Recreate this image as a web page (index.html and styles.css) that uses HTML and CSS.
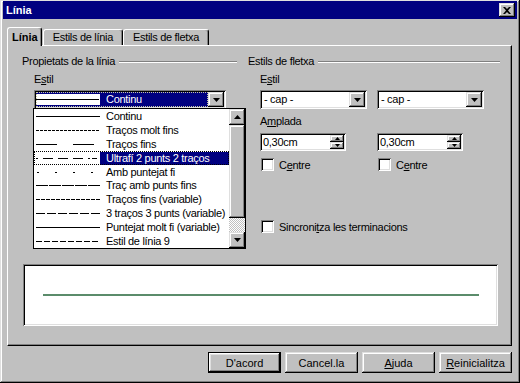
FILE: index.html
```html
<!doctype html>
<html lang="ca">
<head>
<meta charset="utf-8">
<title>Línia</title>
<link rel="stylesheet" href="styles.css">
</head>
<body>
<div class="window">
	<div class="titlebar">
		<span class="title">Línia</span>
		<span class="close"><svg width="8" height="7" viewBox="0 0 8 7"><path d="M0 0h2l2 2 2-2h2l-3 3.5 3 3.5h-2l-2-2-2 2h-2l3-3.5z" fill="#000"/></svg></span>
	</div>

	<div class="dlg">
		<div class="tabs">
			<div class="tab active">Línia</div>
			<div class="tab">Estils de línia</div>
			<div class="tab">Estils de fletxa</div>
		</div>

		<div class="panel">
			<div class="groups">
				<!-- propietats de la línia -->
				<div class="group">
					<div class="group-head"><span>Propietats de la línia</span></div>
					<div class="group-body">
						<div class="lbl">E<u>s</u>til</div>
						<div class="combo-wrap">
							<div class="combo combo-line">
								<div class="val sel">
									<span class="sample-box"><svg width="63" height="11"><line x1="0" y1="5.5" x2="63" y2="5.5" stroke="#000" stroke-width="1" shape-rendering="crispEdges"/></svg></span>
									<span class="txt">Continu</span>
								</div>
								<div class="drop-btn"><svg width="7" height="4"><path d="M0 0h7l-3.5 4z" fill="#000"/></svg></div>
							</div>

							<div class="droplist">
								<div class="items">
									<div class="item"><span class="sample"><svg width="64" height="13"><line x1="0" y1="6.5" x2="64" y2="6.5" stroke="#000" shape-rendering="crispEdges"/></svg></span><span class="label">Continu</span></div>
									<div class="item"><span class="sample"><svg width="64" height="13"><line x1="0" y1="6.5" x2="64" y2="6.5" stroke="#000" stroke-dasharray="3 1" shape-rendering="crispEdges"/></svg></span><span class="label">Traços molt fins</span></div>
									<div class="item"><span class="sample"><svg width="64" height="13"><line x1="0" y1="6.5" x2="64" y2="6.5" stroke="#000" stroke-dasharray="21 16" shape-rendering="crispEdges"/></svg></span><span class="label">Traços fins</span></div>
									<div class="item on"><span class="sample"><svg width="64" height="13"><line x1="0" y1="6.5" x2="64" y2="6.5" stroke="#000" stroke-dasharray="2 5 10 5 10 5 10 5 2" shape-rendering="crispEdges"/></svg></span><span class="label">Ultrafí 2 punts 2 traços</span></div>
									<div class="item"><span class="sample"><svg width="64" height="13"><line x1="1" y1="6.5" x2="64" y2="6.5" stroke="#000" stroke-dasharray="2 16" shape-rendering="crispEdges"/></svg></span><span class="label">Amb puntejat fi</span></div>
									<div class="item"><span class="sample"><svg width="64" height="13"><line x1="0" y1="6.5" x2="64" y2="6.5" stroke="#000" stroke-dasharray="12 1" shape-rendering="crispEdges"/></svg></span><span class="label">Traç amb punts fins</span></div>
									<div class="item"><span class="sample"><svg width="64" height="13"><line x1="0" y1="6.5" x2="64" y2="6.5" stroke="#000" stroke-dasharray="4 1" shape-rendering="crispEdges"/></svg></span><span class="label">Traços fins (variable)</span></div>
									<div class="item"><span class="sample"><svg width="64" height="13"><line x1="0" y1="6.5" x2="64" y2="6.5" stroke="#000" stroke-dasharray="9 2" shape-rendering="crispEdges"/></svg></span><span class="label">3 traços 3 punts (variable)</span></div>
									<div class="item"><span class="sample"><svg width="64" height="13"><line x1="0" y1="6.5" x2="64" y2="6.5" stroke="#000" shape-rendering="crispEdges"/></svg></span><span class="label">Puntejat molt fi (variable)</span></div>
									<div class="item"><span class="sample"><svg width="64" height="13"><line x1="0" y1="6.5" x2="64" y2="6.5" stroke="#000" stroke-dasharray="6 2" shape-rendering="crispEdges"/></svg></span><span class="label">Estil de línia 9</span></div>
								</div>
								<div class="vscroll">
									<div class="sbtn"><svg width="7" height="4"><path d="M3.5 0l3.5 4h-7z" fill="#000"/></svg></div>
									<div class="thumb"></div>
									<div class="track"></div>
									<div class="sbtn"><svg width="7" height="4"><path d="M0 0h7l-3.5 4z" fill="#000"/></svg></div>
								</div>
							</div>
						</div>
					</div>
				</div>

				<!-- estils de fletxa -->
				<div class="group">
					<div class="group-head"><span>Estils de fletxa</span></div>
					<div class="group-body arrows">
						<div class="lbl">E<u>s</u>til</div>
						<div class="pair">
							<div class="combo"><div class="val">- cap -</div><div class="drop-btn"><svg width="7" height="4"><path d="M0 0h7l-3.5 4z" fill="#000"/></svg></div></div>
							<div class="combo"><div class="val">- cap -</div><div class="drop-btn"><svg width="7" height="4"><path d="M0 0h7l-3.5 4z" fill="#000"/></svg></div></div>
						</div>
						<div class="lbl gap-top">A<u>m</u>plada</div>
						<div class="pair spins">
							<div class="spin"><div class="val">0,30cm</div><div class="spin-btns"><span><svg width="5" height="3"><path d="M2.5 0l2.5 3h-5z" fill="#000"/></svg></span><span><svg width="5" height="3"><path d="M0 0h5l-2.5 3z" fill="#000"/></svg></span></div></div>
							<div class="spin"><div class="val">0,30cm</div><div class="spin-btns"><span><svg width="5" height="3"><path d="M2.5 0l2.5 3h-5z" fill="#000"/></svg></span><span><svg width="5" height="3"><path d="M0 0h5l-2.5 3z" fill="#000"/></svg></span></div></div>
						</div>
						<div class="pair checks">
							<label class="check"><span class="box"></span>C<u>e</u>ntre</label>
							<label class="check"><span class="box"></span>C<u>e</u>ntre</label>
						</div>
						<label class="check sync"><span class="box"></span>Sincroni<u>t</u>za les terminacions</label>
					</div>
				</div>
			</div>

			<div class="preview"><div class="preview-line"></div></div>
		</div>

		<div class="buttons">
			<button type="button" class="btn default">D'acord</button>
			<button type="button" class="btn">Cancel.la</button>
			<button type="button" class="btn"><u>A</u>juda</button>
			<button type="button" class="btn"><u>R</u>einicialitza</button>
		</div>
	</div>
</div>
</body>
</html>
```

FILE: styles.css
```css
* {box-sizing: border-box;}

body {
	margin: 0;
	background: #c0c0c0;
	font: 11px "Liberation Sans", Arial, sans-serif;
	letter-spacing: -0.3px;
	color: #000;
}
u {text-decoration: underline; text-underline-offset: 1px;}

/* bordes estilo Windows 98 */
.raised, .btn, .drop-btn, .sbtn, .thumb, .close, .spin-btns span {
	background: #c0c0c0;
	box-shadow: inset -1px -1px #000, inset 1px 1px #dfdfdf, inset -2px -2px #808080, inset 2px 2px #fff;
}

.window {
	width: 520px;
	height: 383px;
	padding: 1px 3px 3px;
	background: #c0c0c0;
	box-shadow: inset -1px -1px #000, inset 1px 1px #dfdfdf, inset -2px -2px #808080, inset 2px 2px #fff;
	display: flex;
	flex-direction: column;
}

.titlebar {
	height: 18px;
	background: #000080;
	color: #fff;
	display: flex;
	align-items: center;
	justify-content: space-between;
	padding: 0 2px 0 3px;
}
.title {font-weight: bold; letter-spacing: 0;}
.close {
	width: 16px;
	height: 14px;
	display: flex;
	align-items: center;
	justify-content: center;
}

.dlg {
	flex: 1;
	padding: 8px 5px 0 4px;
	display: flex;
	flex-direction: column;
}

/* pestanyes */
.tabs {
	display: flex;
	align-items: flex-end;
	height: 18px;
	position: relative;
	z-index: 1;
}
.tab {
	height: 16px;
	padding: 0 9px;
	line-height: 15px;
	border: 1px solid;
	border-color: #fff #000 transparent #fff;
	border-bottom: none;
	border-radius: 3px 3px 0 0;
	box-shadow: inset -1px 0 #808080;
	background: #c0c0c0;
}
.tab.active {
	height: 19px;
	margin-bottom: -1px;
	margin-right: 1px;
	padding: 2px 3px 0 4px;
	font-weight: bold;
	letter-spacing: 0;
}

.panel {
	height: 301px;
	border: 1px solid;
	border-color: #fff #000 #000 #fff;
	box-shadow: inset -1px -1px #808080;
	padding: 9px 0 0 14px;
}

.groups {
	display: grid;
	grid-template-columns: 215px 252px;
	column-gap: 11px;
}
.group-head {
	display: flex;
	align-items: center;
	height: 13px;
	line-height: 13px;
}
.group-head::after {
	content: "";
	flex: 1;
	margin-left: 4px;
	border-top: 1px solid #808080;
	border-bottom: 1px solid #fff;
}
.group-body {padding: 5px 0 0 12px;}
.lbl {line-height: 13px; height: 13px;}
.gap-top {margin-top: 6px;}

/* combos */
.combo-wrap {position: relative; margin-top: 4px;}
.combo {
	height: 19px;
	padding: 2px;
	background: #fff;
	box-shadow: inset 1px 1px #808080, inset -1px -1px #fff, inset 2px 2px #000, inset -2px -2px #dfdfdf;
	display: flex;
}
.combo-line {width: 192px;}
.combo .val {flex: 1; line-height: 15px; padding-left: 2px;}
.drop-btn {
	width: 16px;
	display: flex;
	align-items: center;
	justify-content: center;
}
.val.sel {
	padding: 1px 0 1px 0;
	background: #000080;
	color: #fff;
	display: flex;
	align-items: center;
	outline: 1px dotted #c8c8a0;
	outline-offset: -1px;
}
.sample-box {
	width: 64px;
	height: 11px;
	background: #fff;
	display: flex;
	margin-left: 0;
}
.val.sel .txt {padding-left: 6px; line-height: 13px;}

/* llista desplegada */
.droplist {
	position: absolute;
	left: -1px;
	top: 18px;
	width: 213px;
	height: 141px;
	border: 1px solid #000;
	background: #fff;
	display: flex;
	z-index: 2;
}
.items {flex: 1; padding-top: 1px;}
.item {
	height: 13.8px;
	display: flex;
	align-items: center;
}
.sample {width: 66px; padding-left: 2px; display: flex;}
.label {flex: 1; padding-left: 6px; line-height: 13px; white-space: nowrap;}
.item.on {outline: 1px dotted #000; outline-offset: -1px;}
.item.on .label {background: #000080; color: #fff;}

.vscroll {width: 16px; display: flex; flex-direction: column;}
.sbtn {
	height: 16px;
	display: flex;
	align-items: center;
	justify-content: center;
}
.thumb {height: 93px;}
.track {
	flex: 1;
	background: repeating-conic-gradient(#c0c0c0 0 25%, #fff 0 50%) 0 0/2px 2px;
}

/* fletxes */
.arrows {padding-left: 12px;}
.arrows .pair {
	display: grid;
	grid-template-columns: 107px 107px;
	column-gap: 10px;
	margin-top: 4px;
}
.pair.spins {margin-top: 5px;}
.spin {
	width: 86px;
	height: 18px;
	padding: 2px;
	background: #fff;
	box-shadow: inset 1px 1px #808080, inset -1px -1px #fff, inset 2px 2px #000, inset -2px -2px #dfdfdf;
	display: flex;
}
.spin .val {flex: 1; line-height: 14px; padding-left: 1px;}
.spin-btns {width: 14px; display: flex; flex-direction: column;}
.spin-btns span {
	flex: 1;
	display: flex;
	align-items: center;
	justify-content: center;
}

.check {
	display: flex;
	align-items: center;
	height: 13px;
	padding-left: 1px;
}
.box {
	width: 13px;
	height: 13px;
	margin-right: 5px;
	background: #fff;
	box-shadow: inset 1px 1px #808080, inset -1px -1px #fff, inset 2px 2px #000, inset -2px -2px #dfdfdf;
}
.pair.checks {margin-top: 7px;}
.check.sync {margin-top: 49px;}

/* previsualització */
.preview {
	width: 475px;
	height: 62px;
	margin: 31px 0 0 1px;
	background: #fff;
	box-shadow: inset 1px 1px #808080, inset -1px -1px #fff, inset 2px 2px #000, inset -2px -2px #dfdfdf;
	display: flex;
	align-items: center;
	padding: 0 19px 0 20px;
}
.preview-line {flex: 1; height: 2px; background: #5b8c6b;}

/* botons */
.buttons {
	display: flex;
	justify-content: flex-end;
	gap: 4px;
	margin-top: 6px;
}
.btn {
	width: 73px;
	height: 21px;
	border: none;
	padding: 0;
	font: inherit;
	color: #000;
}
.btn.default {
	border: 1px solid #000;
	box-shadow: inset -1px -1px #000, inset 1px 1px #fff, inset -2px -2px #808080, inset 2px 2px #dfdfdf;
}
```
